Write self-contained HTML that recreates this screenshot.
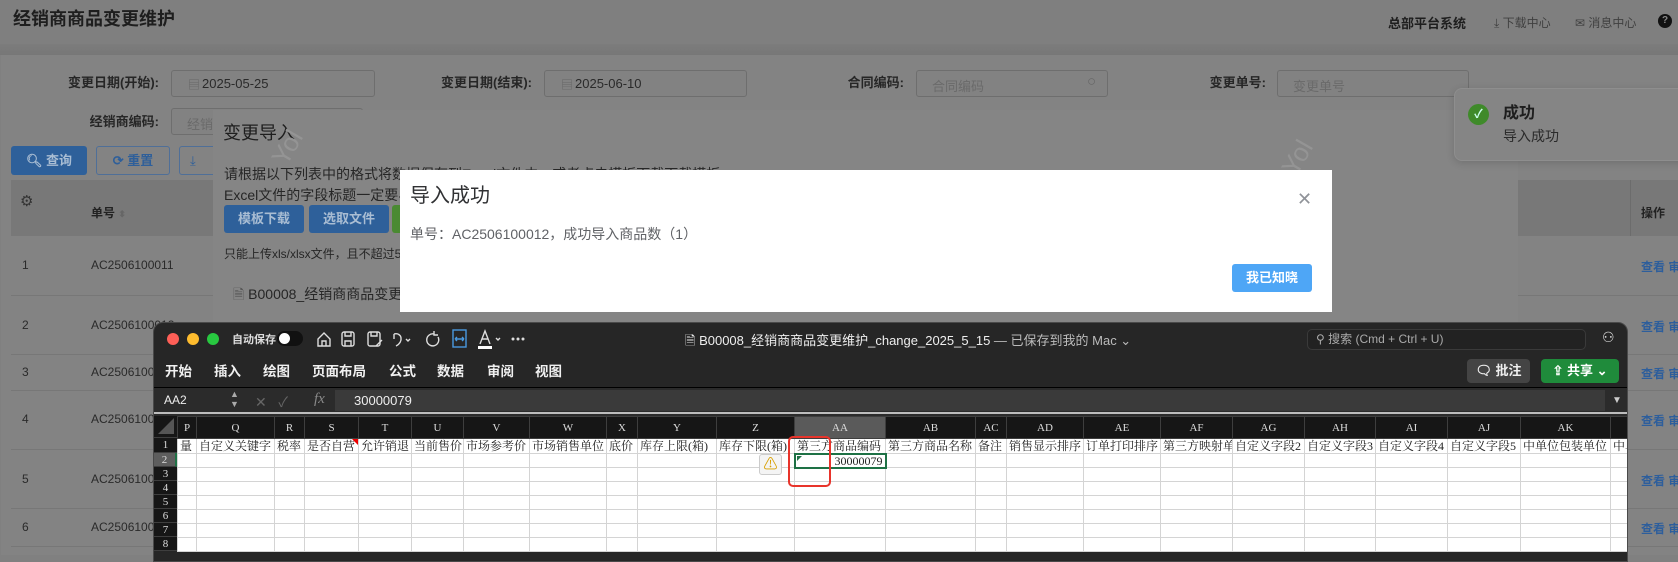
<!DOCTYPE html>
<html><head><meta charset="utf-8"><style>
*{margin:0;padding:0;box-sizing:border-box}
body{width:1678px;height:547px;overflow:hidden;background:#808080;font-family:"Liberation Sans","Noto Sans CJK SC",sans-serif;position:relative;color:#2a2a2a}
.a{position:absolute;white-space:nowrap}
.inp{position:absolute;border:1px solid #6e6e6e;border-radius:3px;background:#828282;height:27px}
.lbl{position:absolute;font-size:13px;font-weight:bold;color:#262626;text-align:right;width:150px;line-height:16px}
.ph{color:#6a6a6a}
.btnb{position:absolute;background:#2e609a;color:#a9bdd3;font-size:13px;font-weight:bold;border-radius:3px;text-align:center}
.xw{position:absolute;left:153px;top:322px;width:1475px;height:240px;background:#262626;border:1px solid #4a4a4a;border-radius:10px 10px 0 0;overflow:hidden;color:#e8e8e8}
.tab{position:absolute;top:37px;font-size:13.5px;font-weight:bold;color:#f0f0f0}
table{position:absolute;left:23px;top:93px;width:1524px;border-collapse:collapse;table-layout:fixed;font-family:"Liberation Serif","Noto Serif CJK SC",serif;font-size:12px;color:#222}
td{border:1px solid #d4d4d4;background:#fff;height:14px;line-height:12px;overflow:hidden;white-space:nowrap;padding:0 2px}
tr.h td{background:#161616;color:#ddd;height:22px;text-align:center;border-color:#3e3e3e;font-size:11px}
tr.r1 td{height:15px}
.rh{position:absolute;left:0;width:23px;background:#161616;color:#ddd;font-family:"Liberation Serif",serif;font-size:11px;text-align:center;border-bottom:1px solid #3e3e3e}
.lnk{position:absolute;left:1641px;color:#2d5e9c;font-size:12px;font-weight:bold;white-space:nowrap}
</style></head><body>
<!-- header -->
<div class="a" style="left:0;top:0;width:1678px;height:44px;background:#7f7f7f"></div>
<div class="a" style="left:0;top:44px;width:1678px;height:11px;background:linear-gradient(#7c7c7c,#777)"></div>
<div class="a" style="left:13px;top:5px;font-size:18px;font-weight:bold;color:#1e1e1e">经销商商品变更维护</div>
<div class="a" style="left:1388px;top:13px;font-size:13px;font-weight:bold;color:#1e1e1e">总部平台系统</div>
<div class="a" style="left:1494px;top:14px;font-size:12px;color:#404040">⤓ 下载中心</div>
<div class="a" style="left:1575px;top:14px;font-size:12px;color:#404040">✉ 消息中心</div>
<div class="a" style="left:1658px;top:14px;width:14px;height:14px;border-radius:50%;background:#111;color:#888;font-size:10px;font-weight:bold;text-align:center;line-height:14px">?</div>
<!-- panel -->
<div class="a" style="left:1px;top:55px;width:1677px;height:500px;background:#838383"></div>
<div class="lbl" style="left:9px;top:75px">变更日期(开始):</div>
<div class="inp" style="left:171px;top:70px;width:204px"><span class="a" style="left:16px;top:5px;font-size:12px;color:#666">▤</span><span class="a" style="left:30px;top:5px;font-size:13px;color:#2a2a2a">2025-05-25</span></div>
<div class="lbl" style="left:382px;top:75px">变更日期(结束):</div>
<div class="inp" style="left:544px;top:70px;width:203px"><span class="a" style="left:16px;top:5px;font-size:12px;color:#666">▤</span><span class="a" style="left:30px;top:5px;font-size:13px;color:#2a2a2a">2025-06-10</span></div>
<div class="lbl" style="left:754px;top:75px">合同编码:</div>
<div class="inp" style="left:916px;top:70px;width:192px"><span class="a ph" style="left:15px;top:5px;font-size:13px">合同编码</span><span class="a" style="left:170px;top:2px;font-size:15px;color:#666">○</span></div>
<div class="lbl" style="left:1116px;top:75px">变更单号:</div>
<div class="inp" style="left:1277px;top:70px;width:192px"><span class="a ph" style="left:15px;top:5px;font-size:13px">变更单号</span></div>
<div class="lbl" style="left:9px;top:114px">经销商编码:</div>
<div class="inp" style="left:171px;top:108px;width:192px"><span class="a ph" style="left:15px;top:5px;font-size:13px">经销商编码</span></div>
<div class="btnb" style="left:11px;top:146px;width:76px;height:29px;line-height:29px">🔍︎ 查询</div>
<div class="a" style="left:96px;top:146px;width:74px;height:29px;border:1px solid #4f6f98;border-radius:3px;color:#2e5f9a;font-size:13px;font-weight:bold;line-height:27px;text-align:center">⟳ 重置</div>
<div class="a" style="left:179px;top:146px;width:60px;height:29px;border:1px solid #4f6f98;border-radius:3px;color:#2e5f9a;font-size:13px;line-height:27px;padding-left:10px">⤓</div>
<div class="a" style="left:11px;top:180px;width:1667px;height:56px;background:#787878"></div>
<div class="a" style="left:20px;top:192px;font-size:15px;color:#333">⚙</div>
<div class="a" style="left:91px;top:204px;font-size:12px;font-weight:bold;color:#222">单号 <span style="color:#666;font-size:9px">⬍</span></div>
<div class="a" style="left:1630px;top:180px;width:1px;height:56px;background:#6c6c6c"></div>
<div class="a" style="left:1641px;top:204px;font-size:12px;font-weight:bold;color:#222">操作</div>
<div class="a" style="left:22px;top:258px;font-size:12px">1</div><div class="a" style="left:91px;top:258px;font-size:12px">AC2506100011</div>
<div class="a" style="left:11px;top:295px;width:1667px;height:1px;background:#777"></div>
<div class="a" style="left:11px;top:354px;width:1667px;height:1px;background:#777"></div>
<div class="a" style="left:11px;top:390px;width:1667px;height:1px;background:#777"></div>
<div class="a" style="left:11px;top:449px;width:1667px;height:1px;background:#777"></div>
<div class="a" style="left:11px;top:508px;width:1667px;height:1px;background:#777"></div>
<div class="a" style="left:11px;top:546px;width:1667px;height:1px;background:#777"></div>
<div class="a" style="left:22px;top:318px;font-size:12px">2</div><div class="a" style="left:91px;top:318px;font-size:12px">AC2506100012</div>
<div class="a" style="left:22px;top:365px;font-size:12px">3</div><div class="a" style="left:91px;top:365px;font-size:12px">AC2506100010</div>
<div class="a" style="left:22px;top:412px;font-size:12px">4</div><div class="a" style="left:91px;top:412px;font-size:12px">AC2506100009</div>
<div class="a" style="left:22px;top:472px;font-size:12px">5</div><div class="a" style="left:91px;top:472px;font-size:12px">AC2506100008</div>
<div class="a" style="left:22px;top:520px;font-size:12px">6</div><div class="a" style="left:91px;top:520px;font-size:12px">AC2506100007</div>
<div class="lnk" style="top:258px">查看 审</div>
<div class="lnk" style="top:318px">查看 审</div>
<div class="lnk" style="top:365px">查看 审</div>
<div class="lnk" style="top:412px">查看 审</div>
<div class="lnk" style="top:472px">查看 审</div>
<div class="lnk" style="top:520px">查看 审</div>
<!-- change import dialog -->
<div class="a" style="left:213px;top:110px;width:1305px;height:450px;background:#858585"></div>
<div class="a" style="left:223px;top:119px;font-size:18px;color:#1e1e1e">变更导入</div>
<div class="a" style="left:224px;top:164px;font-size:14px;color:#262626">请根据以下列表中的格式将数据保存到Excel文件中，或者点击模板下载下载模板</div>
<div class="a" style="left:224px;top:185px;font-size:14px;color:#262626">Excel文件的字段标题一定要与模板一致</div>
<div class="btnb" style="left:224px;top:205px;width:80px;height:28px;line-height:28px">模板下载</div>
<div class="btnb" style="left:309px;top:205px;width:80px;height:28px;line-height:28px">选取文件</div>
<div class="a" style="left:392px;top:205px;width:80px;height:28px;background:#4a8a32;border-radius:3px"></div>
<div class="a" style="left:224px;top:245px;font-size:12px;color:#262626">只能上传xls/xlsx文件，且不超过5M</div>
<div class="a" style="left:233px;top:284px;font-size:14px;color:#262626"><span style="color:#555">🗎︎</span> B00008_经销商商品变更维护_change_2025_5_15.xlsx</div>
<div class="a" style="left:270px;top:132px;font-size:26px;color:#949494;transform:rotate(-60deg)">Yol</div>
<div class="a" style="left:1280px;top:142px;font-size:26px;color:#949494;transform:rotate(-60deg)">Yol</div>
<!-- success dialog -->
<div class="a" style="left:400px;top:170px;width:932px;height:142px;background:#fff"></div>
<div class="a" style="left:410px;top:179px;font-size:20px;color:#303133">导入成功</div>
<div class="a" style="left:410px;top:224px;font-size:14px;color:#606266">单号：AC2506100012，成功导入商品数（1）</div>
<div class="a" style="left:1297px;top:189px;font-size:18px;color:#909399;font-weight:300">✕</div>
<div class="a" style="left:1232px;top:264px;width:80px;height:28px;background:#4ea6f6;border-radius:3px;color:#fff;font-size:13px;font-weight:bold;text-align:center;line-height:28px">我已知晓</div>
<!-- toast -->
<div class="a" style="left:1454px;top:88px;width:240px;height:73px;background:#858585;border:1px solid #8e8e8e;border-radius:8px;box-shadow:0 2px 8px rgba(0,0,0,.15)"></div>
<div class="a" style="left:1468px;top:104px;width:21px;height:21px;border-radius:50%;background:#3f8a2a;color:#cfe;font-size:12px;text-align:center;line-height:21px;font-weight:bold">✓</div>
<div class="a" style="left:1503px;top:99px;font-size:16px;font-weight:bold;color:#1e1e1e">成功</div>
<div class="a" style="left:1503px;top:126px;font-size:14px;color:#2a2a2a">导入成功</div>
<!-- excel window -->
<div class="xw">
 <div class="a" style="left:13px;top:10px;width:12px;height:12px;border-radius:50%;background:#fe5f57"></div>
 <div class="a" style="left:33px;top:10px;width:12px;height:12px;border-radius:50%;background:#febc2e"></div>
 <div class="a" style="left:53px;top:10px;width:12px;height:12px;border-radius:50%;background:#28c840"></div>
 <div class="a" style="left:78px;top:8px;font-size:11px;font-weight:bold;color:#ddd">自动保存</div>
 <div class="a" style="left:123px;top:8px;width:26px;height:15px;border-radius:8px;background:#111"><div style="position:absolute;left:2px;top:2px;width:11px;height:11px;border-radius:50%;background:#fff"></div></div>
 <svg class="a" style="left:160px;top:5px" width="250" height="22" viewBox="0 0 250 22" fill="none" stroke="#ddd" stroke-width="1.4">
  <path d="M4 11 L10 5 L16 11 V18 H4 Z M8 18 V13 H12 V18"/>
  <rect x="28" y="4" width="12" height="14" rx="2"/><path d="M31 4 V8 H37 V4 M31 18 V13 H37 V18"/>
  <rect x="54" y="4" width="12" height="14" rx="2"/><path d="M57 4 V8 H63 V4 M62 18 L68 12"/>
  <path d="M80 6 C88 4 90 14 82 18 M80 6 V11"/><path d="M92 11 L94 13 L96 11"/>
  <path d="M120 6 A6 6 0 1 0 124 9 M120 3 V7 H124"/>
  <rect x="139" y="2" width="13" height="17" stroke="#4a9ae0"/><path d="M141 11 H150 M141 11 L143 9 M141 11 L143 13 M150 11 L148 9 M150 11 L148 13" stroke="#4a9ae0"/>
  <path d="M166 16 L171 3 L176 16 M168 11 H174"/><rect x="164" y="18" width="14" height="3" fill="#fff" stroke="none"/>
  <path d="M182 10 L184 12 L186 10"/><circle cx="199" cy="11" r=".8"/><circle cx="204" cy="11" r=".8"/><circle cx="209" cy="11" r=".8"/>
 </svg>
 <div class="a" style="left:531px;top:7px;font-size:13px;color:#eee">🗎︎ B00008_经销商商品变更维护_change_2025_5_15 <span style="color:#bbb">— 已保存到我的 Mac ⌄</span></div>
 <div class="a" style="left:1153px;top:6px;width:279px;height:21px;border:1px solid #3a3a3a;background:#222;border-radius:5px;font-size:12px;color:#aaa;line-height:19px;padding-left:8px">⚲ 搜索 (Cmd + Ctrl + U)</div>
 <div class="a" style="left:1448px;top:6px;font-size:14px;color:#ddd">⚇</div>
 <div class="tab" style="left:11px">开始</div><div class="tab" style="left:60px">插入</div><div class="tab" style="left:109px">绘图</div><div class="tab" style="left:158px">页面布局</div><div class="tab" style="left:235px">公式</div><div class="tab" style="left:283px">数据</div><div class="tab" style="left:333px">审阅</div><div class="tab" style="left:381px">视图</div>
 <div class="a" style="left:1313px;top:36px;width:63px;height:24px;background:#444;border-radius:4px;font-size:13px;font-weight:bold;color:#eee;line-height:24px;text-align:center">🗨︎ 批注</div>
 <div class="a" style="left:1387px;top:36px;width:78px;height:24px;background:#1f8b3b;border-radius:4px;font-size:13px;font-weight:bold;color:#fff;line-height:24px;text-align:center">⇪ 共享 ⌄</div>
 <div class="a" style="left:0;top:64px;width:1475px;height:1px;background:#000"></div>
 <div class="a" style="left:0;top:65px;width:1475px;height:25px;background:#2b2b2b"></div>
 <div class="a" style="left:10px;top:70px;font-size:12px;color:#eee">AA2</div>
 <div class="a" style="left:76px;top:66px;font-size:9px;color:#aaa;line-height:10px">▲<br>▼</div>
 <div class="a" style="left:101px;top:69px;font-size:14px;color:#666">✕ &nbsp; ✓</div>
 <div class="a" style="left:160px;top:68px;font-size:15px;font-style:italic;font-family:'Liberation Serif',serif;color:#888">fx</div>
 <div class="a" style="left:181px;top:67px;width:1270px;height:21px;background:#3a3a3a;font-size:13px;color:#eee;line-height:21px;padding-left:19px">30000079</div>
 <div class="a" style="left:1458px;top:72px;font-size:10px;color:#ccc">▼</div>
 <div class="a" style="left:0;top:89px;width:1475px;height:4px;background:#2b2b2b;border-top:2px solid #bdbdbd"></div>
 <!-- row headers -->
 <div class="rh" style="top:93px;height:22px;background:#161616"><div style="position:absolute;right:3px;bottom:3px;width:0;height:0;border-left:16px solid transparent;border-bottom:16px solid #555"></div></div>
 <div class="rh" style="top:115px;height:15px;line-height:15px">1</div>
 <div class="rh" style="top:130px;height:14px;line-height:14px;background:#5e5e5e;border-right:2px solid #1e7145">2</div>
 <div class="rh" style="top:144px;height:14px;line-height:14px">3</div>
 <div class="rh" style="top:158px;height:14px;line-height:14px">4</div>
 <div class="rh" style="top:172px;height:14px;line-height:14px">5</div>
 <div class="rh" style="top:186px;height:14px;line-height:14px">6</div>
 <div class="rh" style="top:200px;height:14px;line-height:14px">7</div>
 <div class="rh" style="top:214px;height:14px;line-height:14px">8</div>
 <table>
  <colgroup><col style="width:19px"><col style="width:78px"><col style="width:30px"><col style="width:54px"><col style="width:53px"><col style="width:52px"><col style="width:66px"><col style="width:77px"><col style="width:31px"><col style="width:79px"><col style="width:78px"><col style="width:91px"><col style="width:90px"><col style="width:31px"><col style="width:77px"><col style="width:77px"><col style="width:72px"><col style="width:72px"><col style="width:71px"><col style="width:72px"><col style="width:73px"><col style="width:90px"><col style="width:91px"></colgroup>
  <tr class="h"><td>P</td><td>Q</td><td>R</td><td>S</td><td>T</td><td>U</td><td>V</td><td>W</td><td>X</td><td>Y</td><td>Z</td><td style="background:#5a5a5a">AA</td><td>AB</td><td>AC</td><td>AD</td><td>AE</td><td>AF</td><td>AG</td><td>AH</td><td>AI</td><td>AJ</td><td>AK</td><td>AL</td></tr>
  <tr class="r1"><td>量</td><td>自定义关键字</td><td>税率</td><td style="position:relative">是否自营<span style="position:absolute;right:0;top:0;border-left:6px solid transparent;border-top:6px solid #e00"></span></td><td>允许销退</td><td>当前售价</td><td>市场参考价</td><td>市场销售单位</td><td>底价</td><td>库存上限(箱)</td><td>库存下限(箱)</td><td>第三方商品编码</td><td>第三方商品名称</td><td>备注</td><td>销售显示排序</td><td>订单打印排序</td><td>第三方映射单位</td><td>自定义字段2</td><td>自定义字段3</td><td>自定义字段4</td><td>自定义字段5</td><td>中单位包装单位</td><td>中单位</td></tr>
  <tr><td></td><td></td><td></td><td></td><td></td><td></td><td></td><td></td><td></td><td></td><td></td><td style="border:2px solid #1e7145;text-align:right;position:relative"><span style="position:absolute;left:1px;top:1px;border-right:5px solid transparent;border-top:5px solid #1e7145"></span>30000079</td><td></td><td></td><td></td><td></td><td></td><td></td><td></td><td></td><td></td><td></td><td></td></tr>
  <tr><td></td><td></td><td></td><td></td><td></td><td></td><td></td><td></td><td></td><td></td><td></td><td></td><td></td><td></td><td></td><td></td><td></td><td></td><td></td><td></td><td></td><td></td><td></td></tr>
  <tr><td></td><td></td><td></td><td></td><td></td><td></td><td></td><td></td><td></td><td></td><td></td><td></td><td></td><td></td><td></td><td></td><td></td><td></td><td></td><td></td><td></td><td></td><td></td></tr>
  <tr><td></td><td></td><td></td><td></td><td></td><td></td><td></td><td></td><td></td><td></td><td></td><td></td><td></td><td></td><td></td><td></td><td></td><td></td><td></td><td></td><td></td><td></td><td></td></tr>
  <tr><td></td><td></td><td></td><td></td><td></td><td></td><td></td><td></td><td></td><td></td><td></td><td></td><td></td><td></td><td></td><td></td><td></td><td></td><td></td><td></td><td></td><td></td><td></td></tr>
  <tr><td></td><td></td><td></td><td></td><td></td><td></td><td></td><td></td><td></td><td></td><td></td><td></td><td></td><td></td><td></td><td></td><td></td><td></td><td></td><td></td><td></td><td></td><td></td></tr>
  <tr><td></td><td></td><td></td><td></td><td></td><td></td><td></td><td></td><td></td><td></td><td></td><td></td><td></td><td></td><td></td><td></td><td></td><td></td><td></td><td></td><td></td><td></td><td></td></tr>
 </table>
 <div class="a" style="left:605px;top:131px;width:23px;height:21px;background:#f4f4f4;border:1px solid #ccc;border-radius:3px;text-align:center;font-size:14px;line-height:19px;color:#d8a000">⚠</div>
 <div class="a" style="left:634px;top:113px;width:43px;height:51px;border:2px solid #e8342b;border-radius:5px"></div>
</div>
</body></html>
